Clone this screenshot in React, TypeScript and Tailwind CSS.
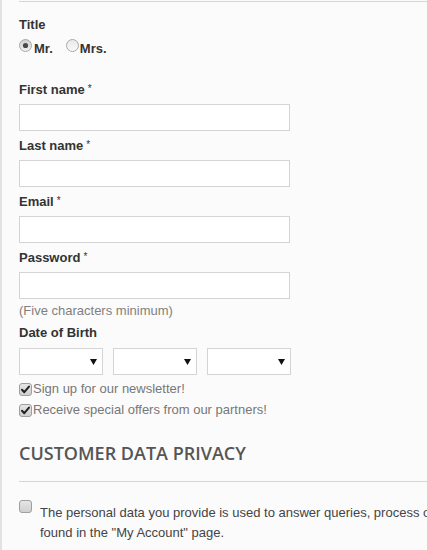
import React from "react";

function Radio({ checked }: { checked?: boolean }) {
  return (
    <svg width="13" height="13" viewBox="0 0 13 13" className="shrink-0">
      <defs>
        <linearGradient id={checked ? "rg1" : "rg2"} x1="0" y1="0" x2="0" y2="1">
          <stop offset="0" stopColor={checked ? "#cfcfcf" : "#e8e8e8"} />
          <stop offset="1" stopColor={checked ? "#f2f2f2" : "#fafafa"} />
        </linearGradient>
      </defs>
      <circle cx="6.5" cy="6.5" r="6" fill={`url(#${checked ? "rg1" : "rg2"})`} stroke="#a9a9a9" strokeWidth="1" />
      {checked && <circle cx="6.5" cy="6.5" r="2.6" fill="#4a4a4a" />}
    </svg>
  );
}

function Checkbox({ checked }: { checked?: boolean }) {
  return (
    <svg width="13" height="13" viewBox="0 0 13 13" className="shrink-0">
      <defs>
        <linearGradient id="cbg" x1="0" y1="0" x2="0" y2="1">
          <stop offset="0" stopColor="#e6e6e6" />
          <stop offset="1" stopColor="#cfcfcf" />
        </linearGradient>
      </defs>
      <rect x="0.5" y="0.5" width="12" height="12" rx="2.5" fill="url(#cbg)" stroke="#9f9f9f" />
      {checked && (
        <path d="M3 6.8 L5.3 9.2 L10 3.6" fill="none" stroke="#222" strokeWidth="2" strokeLinecap="round" strokeLinejoin="round" />
      )}
    </svg>
  );
}

function Label({ text, req }: { text: string; req?: boolean }) {
  return (
    <div className="text-[13px] leading-[18px] font-bold text-[#333]">
      {text}
      {req && <sup className="ml-[3px] text-[10px] font-normal relative -top-[2px]">*</sup>}
    </div>
  );
}

function Field() {
  return <div className="h-[27px] w-[271px] border border-[#d4d4d4] bg-white" />;
}

function Select() {
  return (
    <div className="flex h-[27px] w-[84px] items-center justify-end border border-[#d4d4d4] bg-white pr-[5px]">
      <svg width="7" height="6" viewBox="0 0 7 6">
        <path d="M0 0 H7 L3.5 6 Z" fill="#111" />
      </svg>
    </div>
  );
}

export default function App() {
  return (
    <div className="h-[550px] w-[427px] overflow-hidden bg-[#fbfbfb] font-['Liberation_Sans',Arial,sans-serif]">
      <div className="h-full w-[900px] border-l-2 border-[#e2e2e2] pl-[17px] pt-px">
        <div className="h-px bg-[#d6d6d6]" />

        <div className="mt-[14px]">
          <Label text="Title" />
        </div>
        <div className="flex h-[24px] items-start text-[13px] font-bold text-[#333]">
          <span className="mt-[5px]"><Radio checked /></span>
          <span className="mt-[6px] ml-[2px] leading-[18px]">Mr.</span>
          <span className="mt-[5px] ml-[13px]"><Radio /></span>
          <span className="mt-[6px] ml-[1px] leading-[18px]">Mrs.</span>
        </div>

        <div className="mt-[23px]">
          <Label text="First name" req />
        </div>
        <div className="mt-[5px]"><Field /></div>

        <div className="mt-[6px]">
          <Label text="Last name" req />
        </div>
        <div className="mt-[5px]"><Field /></div>

        <div className="mt-[6px]">
          <Label text="Email" req />
        </div>
        <div className="mt-[5px]"><Field /></div>

        <div className="mt-[6px]">
          <Label text="Password" req />
        </div>
        <div className="mt-[5px]"><Field /></div>
        <div className="mt-[3px] text-[13px] leading-[18px] text-[#808080]">(Five characters minimum)</div>

        <div className="mt-[4px]">
          <Label text="Date of Birth" />
        </div>
        <div className="mt-[6px] flex gap-[10px]">
          <Select />
          <Select />
          <Select />
        </div>

        <div className="mt-[3px] flex h-[21px] items-center text-[13px] leading-[21px] text-[#777]">
          <span className="mt-[2px]"><Checkbox checked /></span>
          <span className="ml-[1px]">Sign up for our newsletter!</span>
        </div>
        <div className="flex h-[21px] items-center text-[13px] leading-[21px] text-[#777]">
          <span className="mt-[2px]"><Checkbox checked /></span>
          <span className="ml-[1px]">Receive special offers from our partners!</span>
        </div>

        <h3 className="mt-[21px] font-['Open_Sans',sans-serif] text-[18px] leading-[24px] font-semibold text-[#555]">
          CUSTOMER DATA PRIVACY
        </h3>
        <div className="mt-[16px] h-px bg-[#d6d6d6]" />

        <div className="mt-[18px] flex items-start">
          <span className="mt-[0px]"><Checkbox /></span>
          <p className="ml-[8px] mt-[3px] whitespace-nowrap text-[13px] leading-[20px] text-[#444]">
            The personal data you provide is used to answer queries, process orders or allow access to specific information. You have the right to modify and delete all the personal information
            <br />
            found in the "My Account" page.
          </p>
        </div>
      </div>
    </div>
  );
}
